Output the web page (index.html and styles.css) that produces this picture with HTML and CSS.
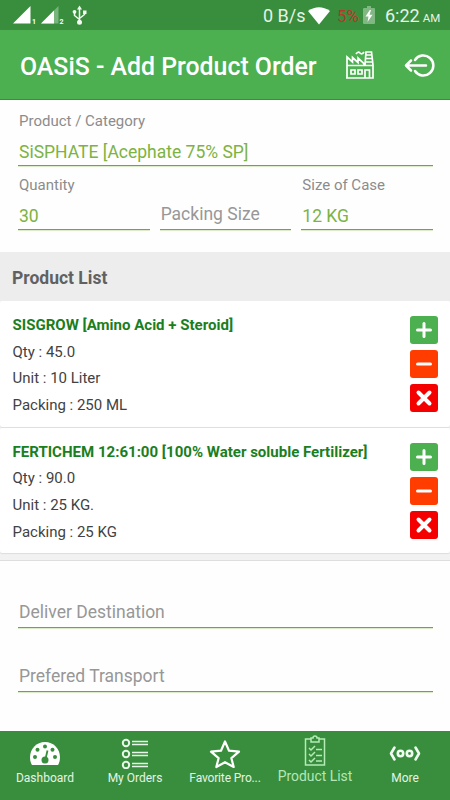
FILE: index.html
```html
<!DOCTYPE html>
<html lang="en">
<head>
<meta charset="utf-8">
<title>OASiS - Add Product Order</title>
<link rel="stylesheet" href="styles.css">
</head>
<body>
<div class="status">
  <svg class="signals" width="76" height="30" viewBox="0 0 76 30">
    <path d="M0 23.500L17.500 6V23.500z" fill="#fff"/>
    <path d="M28 23.500L45.500 6V23.500z" fill="#78b47c"/>
    <path d="M28 23.500L41 10.500V23.500z" fill="#fff"/>
    <text x="19" y="24" class="sim">1</text><text x="46.500" y="24" class="sim">2</text>
    <g fill="none" stroke="#f2faf2" stroke-width="1.500"><path d="M66.500 22V8M61.500 12v3.500l5 4M71.500 12v2.500l-5 4"/></g>
    <path d="M64 9.500L66.500 5.500 69 9.500zM70 10.500h3.500V14H70z" fill="#f2faf2"/><circle cx="61.500" cy="11.800" r="1.900" fill="#f2faf2"/><circle cx="66.500" cy="22.300" r="2.500" fill="#f2faf2"/>
  </svg>
  <span class="rate">0 B/s</span>
  <svg class="wifi" width="22" height="18" viewBox="0 0 22 18"><path d="M0 4Q11-3.500 22 4L11 17.500z" fill="#fff"/></svg>
  <span class="percent">5%</span>
  <svg class="battery" width="12" height="18" viewBox="0 0 12 18"><path d="M1 2h3V0h4v2h3a1 1 0 0 1 1 1v14a1 1 0 0 1-1 1H1a1 1 0 0 1-1-1V3a1 1 0 0 1 1-1z" fill="#80b783"/><path d="M6.800 4L2.500 10.500h3L4.500 16 9.500 8.800h-3L8 4z" fill="#fff"/></svg>
  <span class="clock">6:22</span><span class="meridiem">AM</span>
</div>
<header class="appbar">
  <h1>OASiS - Add Product Order</h1>
  <svg class="factory" width="28" height="30" viewBox="0 0 28 30" fill="none" stroke="#fff" stroke-width="1.700">
    <path d="M1 28V7l5.500 5V7.500l5.500 5V8l6 5.500V15M1 15.500h26M19 15L20 2h5.500L27 15v13H0M20 5h6M19.700 8.500h6.500M19.400 12h7"/>
    <path d="M5 20h4v4H5zM12 20h4v4h-4zM19 28v-8h4.500v8"/>
    <path d="M10 4q2-3 4-1t4-1" />
  </svg>
  <svg class="logout" width="32" height="26" viewBox="0 0 32 26" fill="none" stroke="#fff" stroke-width="2.500" stroke-linecap="round" stroke-linejoin="round"><path d="M11 7a10 10 0 1 1 0 11M22 12.500H2.500M7 7.500l-5 5 5 5"/></svg>
</header>
<section class="form order">
  <div class="field"><label>Product / Category</label><div class="value">SiSPHATE [Acephate 75% SP]</div></div>
  <div class="columns">
    <div class="field"><label>Quantity</label><div class="value">30</div></div>
    <div class="field"><label></label><div class="value hint">Packing Size</div></div>
    <div class="field"><label>Size of Case</label><div class="value">12 KG</div></div>
  </div>
</section>
<h2 class="section-title">Product List</h2>
<main class="products">
  <article class="product">
    <div class="details"><h3>SISGROW [Amino Acid + Steroid]</h3><p>Qty : 45.0</p><p>Unit : 10 Liter</p><p>Packing : 250 ML</p></div>
    <div class="actions">
      <svg class="add" viewBox="0 0 28 28"><path d="M14 7.500v13M7.500 14h13"/></svg>
      <svg class="minus" viewBox="0 0 28 28"><path d="M7.500 14h13"/></svg>
      <svg class="remove" viewBox="0 0 28 28"><path d="M8.500 8.500l11 11M19.500 8.500l-11 11"/></svg>
    </div>
  </article>
  <article class="product">
    <div class="details"><h3>FERTICHEM 12:61:00 [100% Water soluble Fertilizer]</h3><p>Qty : 90.0</p><p>Unit : 25 KG.</p><p>Packing : 25 KG</p></div>
    <div class="actions">
      <svg class="add" viewBox="0 0 28 28"><path d="M14 7.500v13M7.500 14h13"/></svg>
      <svg class="minus" viewBox="0 0 28 28"><path d="M7.500 14h13"/></svg>
      <svg class="remove" viewBox="0 0 28 28"><path d="M8.500 8.500l11 11M19.500 8.500l-11 11"/></svg>
    </div>
  </article>
</main>
<section class="form delivery">
  <div class="value hint">Deliver Destination</div>
  <div class="value hint">Prefered Transport</div>
</section>
<nav class="tabs">
  <div class="tab">
    <svg width="32" height="32" viewBox="0 0 32 32"><path d="M3 28Q1 25 1 20.500C1 11.500 7.500 5 16 5s15 6.500 15 15.500Q31 25 29 28z" fill="#fff"/><g fill="#388e3c"><circle cx="6" cy="20" r="2"/><circle cx="8.500" cy="12.800" r="2"/><circle cx="16" cy="9.500" r="2"/><circle cx="23.500" cy="12.800" r="2"/><circle cx="26" cy="20" r="2"/><circle cx="16" cy="23" r="3.500"/></g><path d="M16.500 22L18.500 13.500" stroke="#388e3c" stroke-width="1.800"/></svg>
    <span>Dashboard</span>
  </div>
  <div class="tab">
    <svg width="32" height="32" viewBox="0 0 32 32" fill="none" stroke="#e8f5e9" stroke-width="1.500"><g stroke-width="2"><circle cx="7" cy="6" r="3.200"/><circle cx="7" cy="17" r="3.200"/><circle cx="7" cy="28" r="3.200"/></g><path d="M13 4.500h16M13 7.500h16M13 15.500h16M13 18.500h16M13 26.500h16M13 29.500h16"/></svg>
    <span>My Orders</span>
  </div>
  <div class="tab">
    <svg width="32" height="32" viewBox="0 0 32 32" fill="none" stroke="#fff" stroke-width="2.200" stroke-linejoin="round"><path d="M16 4.500l4 9.200 10 .9-7.600 6.600L24.700 30 16 25.200 7.300 30l2.300-8.800L2 14.600l10-.9z"/></svg>
    <span class="tight">Favorite Pro...</span>
  </div>
  <div class="tab active">
    <svg width="32" height="32" viewBox="0 0 32 32" fill="none" stroke="#b4ecb6" stroke-width="1.500"><path d="M12 4H6.500v26h19V4H20M12 3h2q0-2 2-2t2 2h2v4h-8z"/><path d="M10 13l2 2 4-4M10 19l2 2 4-4M10 25l2 2 4-4M17 14.500h6M17 20.500h6M17 26h6"/></svg>
    <span>Product List</span>
  </div>
  <div class="tab">
    <svg width="32" height="32" viewBox="0 0 32 32" fill="none" stroke="#f1faf1" stroke-width="2.600" stroke-linecap="round" stroke-linejoin="round"><path d="M5.500 10.500L2 16.500l3.500 6M26.500 10.500l3.500 6-3.500 6"/><circle cx="11.500" cy="16.500" r="2.700"/><circle cx="20.500" cy="16.500" r="2.700"/></svg>
    <span>More</span>
  </div>
</nav>
</body>
</html>
```
FILE: styles.css
```css
* { box-sizing: border-box; }
body { margin: 0; width: 450px; height: 800px; display: flex; flex-direction: column; overflow: hidden; background: #fefefe; font-family: Roboto, "Liberation Sans", sans-serif; }
h1, h2, h3, p { margin: 0; white-space: nowrap; }
.status { height: 30px; flex: none; display: flex; align-items: center; padding-left: 13px; background: #388e3c; color: #e6f3e6; font-size: 18px; white-space: nowrap; }
.sim { font-size: 7px; font-weight: 700; fill: #fff; }
.rate { width: 45px; margin-left: 174px; padding-top: 1px; }
.wifi { margin-top: 1px; }
.percent { width: 25px; margin-left: 7px; padding-top: 1px; font-size: 17px; color: #b5392b; }
.battery { margin-left: 1px; }
.clock { margin-left: 10px; padding-top: 1px; }
.meridiem { margin-left: 3px; padding-top: 5px; font-size: 11.500px; }
.appbar { height: 70px; flex: none; display: flex; align-items: center; padding: 3px 0 0 20px; background: #4caf50; border-bottom: 1px solid #388e3c; color: #fff; }
h1 { width: 325px; font-size: 24.850px; font-weight: 500; }
.factory { margin: -3px 0 0 1px; }
.logout { margin: -1px 0 0 30px; }
.form { padding: 0 17px 0 18px; }
.order { height: 152px; flex: none; padding-top: 12px; }
.field label { display: block; height: 19px; padding-left: 1px; font-size: 15px; line-height: 19px; color: #8c8c8c; }
.value { height: 35px; padding: 8px 1px 0; border-bottom: 1px solid #76a532; box-shadow: 0 1px 0 #dcebc8; font-size: 17.500px; line-height: 27px; color: #7cb342; white-space: nowrap; }
.hint { color: #979797; padding-top: 6px; }
.columns { display: grid; grid-template-columns: repeat(3, 1fr); gap: 10px; margin-top: 10px; }
.section-title { height: 49px; flex: none; padding: 2px 12px 0; background: #ededed; color: #616161; font-size: 17.500px; font-weight: 700; line-height: 49px; }
.products { flex: none; height: 260px; background: #f2f2f2; border-bottom: 1px solid #dedede; }
.product { height: 126px; display: flex; justify-content: space-between; padding: 11px 12.500px 0; border-radius: 2px; background: #fff; box-shadow: 0 1px 1px #ddd; }
.product + .product { margin-top: 1px; height: 125px; padding-top: 10.500px; }
.details { line-height: 26.700px; font-size: 15px; color: #424242; }
h3 { font-size: 15.040px; font-weight: 700; color: #1b7e20; }
.actions { display: flex; flex-direction: column; gap: 6px; padding-top: 4px; }
.actions svg { width: 28px; height: 28px; border-radius: 3px; fill: none; stroke: #fff; stroke-width: 3; stroke-linecap: round; }
.actions .add { background: #4caf50; }
.actions .minus { background: #ff3d00; }
.actions .remove { background: #f50000; stroke-width: 4; }
.delivery { flex: 1; padding-top: 32px; }
.delivery .value + .value { margin-top: 29px; }
.tabs { height: 69px; flex: none; display: grid; grid-template-columns: repeat(5, 90px); background: #388e3c; color: #e5f4e5; }
.tab { display: flex; flex-direction: column; align-items: center; padding-top: 6px; font-size: 12px; white-space: nowrap; }
.tab span { line-height: 18px; }
.tab .tight { letter-spacing: -0.15px; }
.active { padding-top: 4px; font-size: 13.900px; color: #b4e7b6; }
```
